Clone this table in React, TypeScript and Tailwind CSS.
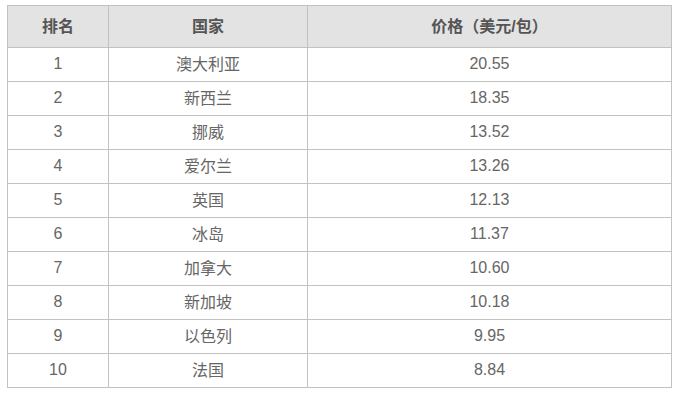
import React from "react";

const rows: [string, string, string][] = [
  ["1", "澳大利亚", "20.55"],
  ["2", "新西兰", "18.35"],
  ["3", "挪威", "13.52"],
  ["4", "爱尔兰", "13.26"],
  ["5", "英国", "12.13"],
  ["6", "冰岛", "11.37"],
  ["7", "加拿大", "10.60"],
  ["8", "新加坡", "10.18"],
  ["9", "以色列", "9.95"],
  ["10", "法国", "8.84"],
];

export default function App() {
  return (
    <div
      className="w-[679px] h-[400px] bg-white pt-[5px] pl-[7px]"
      style={{ fontFamily: '"Liberation Sans", Arial, "Noto Sans CJK SC", sans-serif' }}
    >
      <table className="border-collapse w-[665px] table-fixed text-[#666]">
        <colgroup>
          <col className="w-[101px]" />
          <col className="w-[199px]" />
          <col />
        </colgroup>
        <thead>
          <tr className="bg-[#e3e3e3] h-[42px]">
            <th className="border border-[#c2c2c2] text-[16px] font-bold text-[#555] text-center align-middle p-0">排名</th>
            <th className="border border-[#c2c2c2] text-[16px] font-bold text-[#555] text-center align-middle p-0">国家</th>
            <th className="border border-[#c2c2c2] text-[16px] font-bold text-[#555] text-center align-middle p-0">价格（美元/包）</th>
          </tr>
        </thead>
        <tbody>
          {rows.map((r) => (
            <tr key={r[0]} className="h-[34px]">
              <td className="border border-[#c2c2c2] text-[16px] text-center align-middle p-0 pb-[2px]">{r[0]}</td>
              <td className="border border-[#c2c2c2] text-[16px] text-center align-middle p-0">{r[1]}</td>
              <td className="border border-[#c2c2c2] text-[16px] text-center align-middle p-0 pb-[2px]">{r[2]}</td>
            </tr>
          ))}
        </tbody>
      </table>
    </div>
  );
}
